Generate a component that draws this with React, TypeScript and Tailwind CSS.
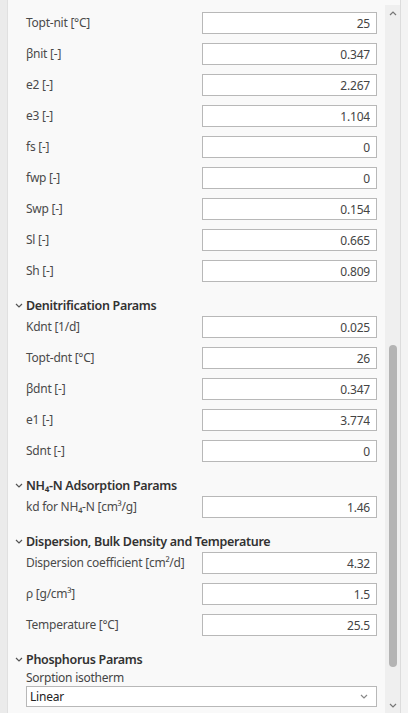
import React from 'react';

type Row = { label: string; value: string };
type Section = { title?: string; rows: Row[] };

const SECTIONS: Section[] = [
  {
    rows: [
      { label: 'Topt-nit [°C]', value: '25' },
      { label: 'βnit [-]', value: '0.347' },
      { label: 'e2 [-]', value: '2.267' },
      { label: 'e3 [-]', value: '1.104' },
      { label: 'fs [-]', value: '0' },
      { label: 'fwp [-]', value: '0' },
      { label: 'Swp [-]', value: '0.154' },
      { label: 'Sl [-]', value: '0.665' },
      { label: 'Sh [-]', value: '0.809' },
    ],
  },
  {
    title: 'Denitrification Params',
    rows: [
      { label: 'Kdnt [1/d]', value: '0.025' },
      { label: 'Topt-dnt [°C]', value: '26' },
      { label: 'βdnt [-]', value: '0.347' },
      { label: 'e1 [-]', value: '3.774' },
      { label: 'Sdnt [-]', value: '0' },
    ],
  },
  {
    title: 'NH₄-N Adsorption Params',
    rows: [{ label: 'kd for NH₄-N [cm³/g]', value: '1.46' }],
  },
  {
    title: 'Dispersion, Bulk Density and Temperature',
    rows: [
      { label: 'Dispersion coefficient [cm²/d]', value: '4.32' },
      { label: 'ρ [g/cm³]', value: '1.5' },
      { label: 'Temperature [°C]', value: '25.5' },
    ],
  },
];

function Chevron({ up = false, className = '' }: { up?: boolean; className?: string }) {
  return (
    <svg width="8" height="5" viewBox="0 0 8 5" className={className}>
      <path
        d={up ? 'M1 4 L4 1 L7 4' : 'M1 1 L4 4 L7 1'}
        fill="none"
        stroke="currentColor"
        strokeWidth="1.2"
      />
    </svg>
  );
}

function SectionHeader({ title }: { title: string }) {
  return (
    <div className="flex items-center pt-[4px] h-[25px] text-[12.5px] tracking-[-0.3px] font-semibold text-[#323232] leading-[21px]">
      <span className="w-[18px] flex justify-center -ml-[18px] text-[#555]">
        <Chevron className="ml-[4px]" />
      </span>
      {title}
    </div>
  );
}

function ParamRow({ label, value }: Row) {
  return (
    <div className="flex items-center h-[22px] mb-[9px]">
      <div className="w-[176px] text-[12px] tracking-[-0.25px] text-[#4a4a4a] whitespace-nowrap">{label}</div>
      <input
        readOnly
        value={value}
        className="w-[175px] h-[22px] bg-white border border-[#b8b8b8] text-right pr-[6px] text-[12px] tracking-[-0.2px] text-[#444] outline-none"
      />
    </div>
  );
}

export default function App() {
  return (
    <div
      className="flex w-[408px] h-[713px] overflow-hidden bg-[#f9f9f9]"
      style={{ fontFamily: '"Segoe UI", "Noto Sans", "Open Sans", sans-serif' }}
    >
      {/* left pane edge */}
      <div className="w-[8px] shrink-0 bg-[#ebebeb] border-r border-[#e0e0e0]" />

      {/* scrolling content */}
      <div className="flex-1 pl-[18px] pr-[8px] pt-[12px]">
        {SECTIONS.map((section, i) => (
          <div key={i}>
            {section.title && <SectionHeader title={section.title} />}
            {section.rows.map((row) => (
              <ParamRow key={row.label} {...row} />
            ))}
          </div>
        ))}

        <SectionHeader title="Phosphorus Params" />
        <div className="text-[12px] tracking-[-0.25px] text-[#444] leading-[16px]">Sorption isotherm</div>
        <div className="flex items-center justify-between h-[21px] bg-white border border-[#b8b8b8] pl-[3px] pr-[8px] text-[12px] tracking-[-0.2px] text-[#222]">
          <span>Linear</span>
          <Chevron className="text-[#888]" />
        </div>
      </div>

      {/* scrollbar */}
      <div className="w-[15px] shrink-0 pt-[5px] flex flex-col">
        <div className="flex-1 bg-[#efefef] flex flex-col items-center">
          <Chevron up className="mt-[6px] text-[#777]" />
          <div className="w-[8px] h-[322px] mt-[329px] rounded-full bg-[#b4b4b4]" />
          <Chevron className="mt-auto mb-[5px] text-[#777]" />
        </div>
      </div>

      {/* right pane edge */}
      <div className="w-[8px] shrink-0 bg-[#f3f3f3] border-l border-[#dcdcdc]" />
    </div>
  );
}
